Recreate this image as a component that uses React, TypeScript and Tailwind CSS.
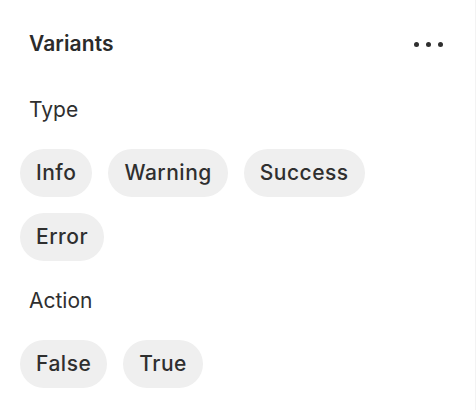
export default function App() {
  const groups = [
    { label: "Type", options: ["Info", "Warning", "Success", "Error"] },
    { label: "Action", options: ["False", "True"] },
  ];

  return (
    <div
      className="w-[476px] h-[410px] bg-white border-r border-[#f3f3f3] text-[#2f2f2f]"
      style={{ fontFamily: "Inter, 'Noto Sans', sans-serif" }}
    >
      <div className="pt-[30px] pl-[20px] pr-[32px]">
        {/* Header */}
        <div className="flex items-center justify-between pl-[9px]">
          <h2 className="text-[21px] leading-[28px] font-semibold tracking-[0.1px] text-[#2b2b2b]">Variants</h2>
          <div className="flex items-center gap-[7px]">
            <span className="w-[5px] h-[5px] rounded-full bg-[#2f2f2f]" />
            <span className="w-[5px] h-[5px] rounded-full bg-[#2f2f2f]" />
            <span className="w-[5px] h-[5px] rounded-full bg-[#2f2f2f]" />
          </div>
        </div>

        {/* Groups */}
        <div className="mt-[38px] flex flex-col gap-[26px]">
          {groups.map((group) => (
            <div key={group.label}>
              <p className="pl-[9px] text-[21px] leading-[28px] mb-[25px]">{group.label}</p>
              <div className="flex flex-wrap gap-[16px] w-[360px]">
                {group.options.map((opt) => (
                  <button
                    key={opt}
                    className="h-[48px] px-[16px] rounded-full bg-[#efefef] text-[21px] leading-[28px] font-medium tracking-[0.5px] text-[#2f2f2f]"
                  >
                    {opt}
                  </button>
                ))}
              </div>
            </div>
          ))}
        </div>
      </div>
    </div>
  );
}
